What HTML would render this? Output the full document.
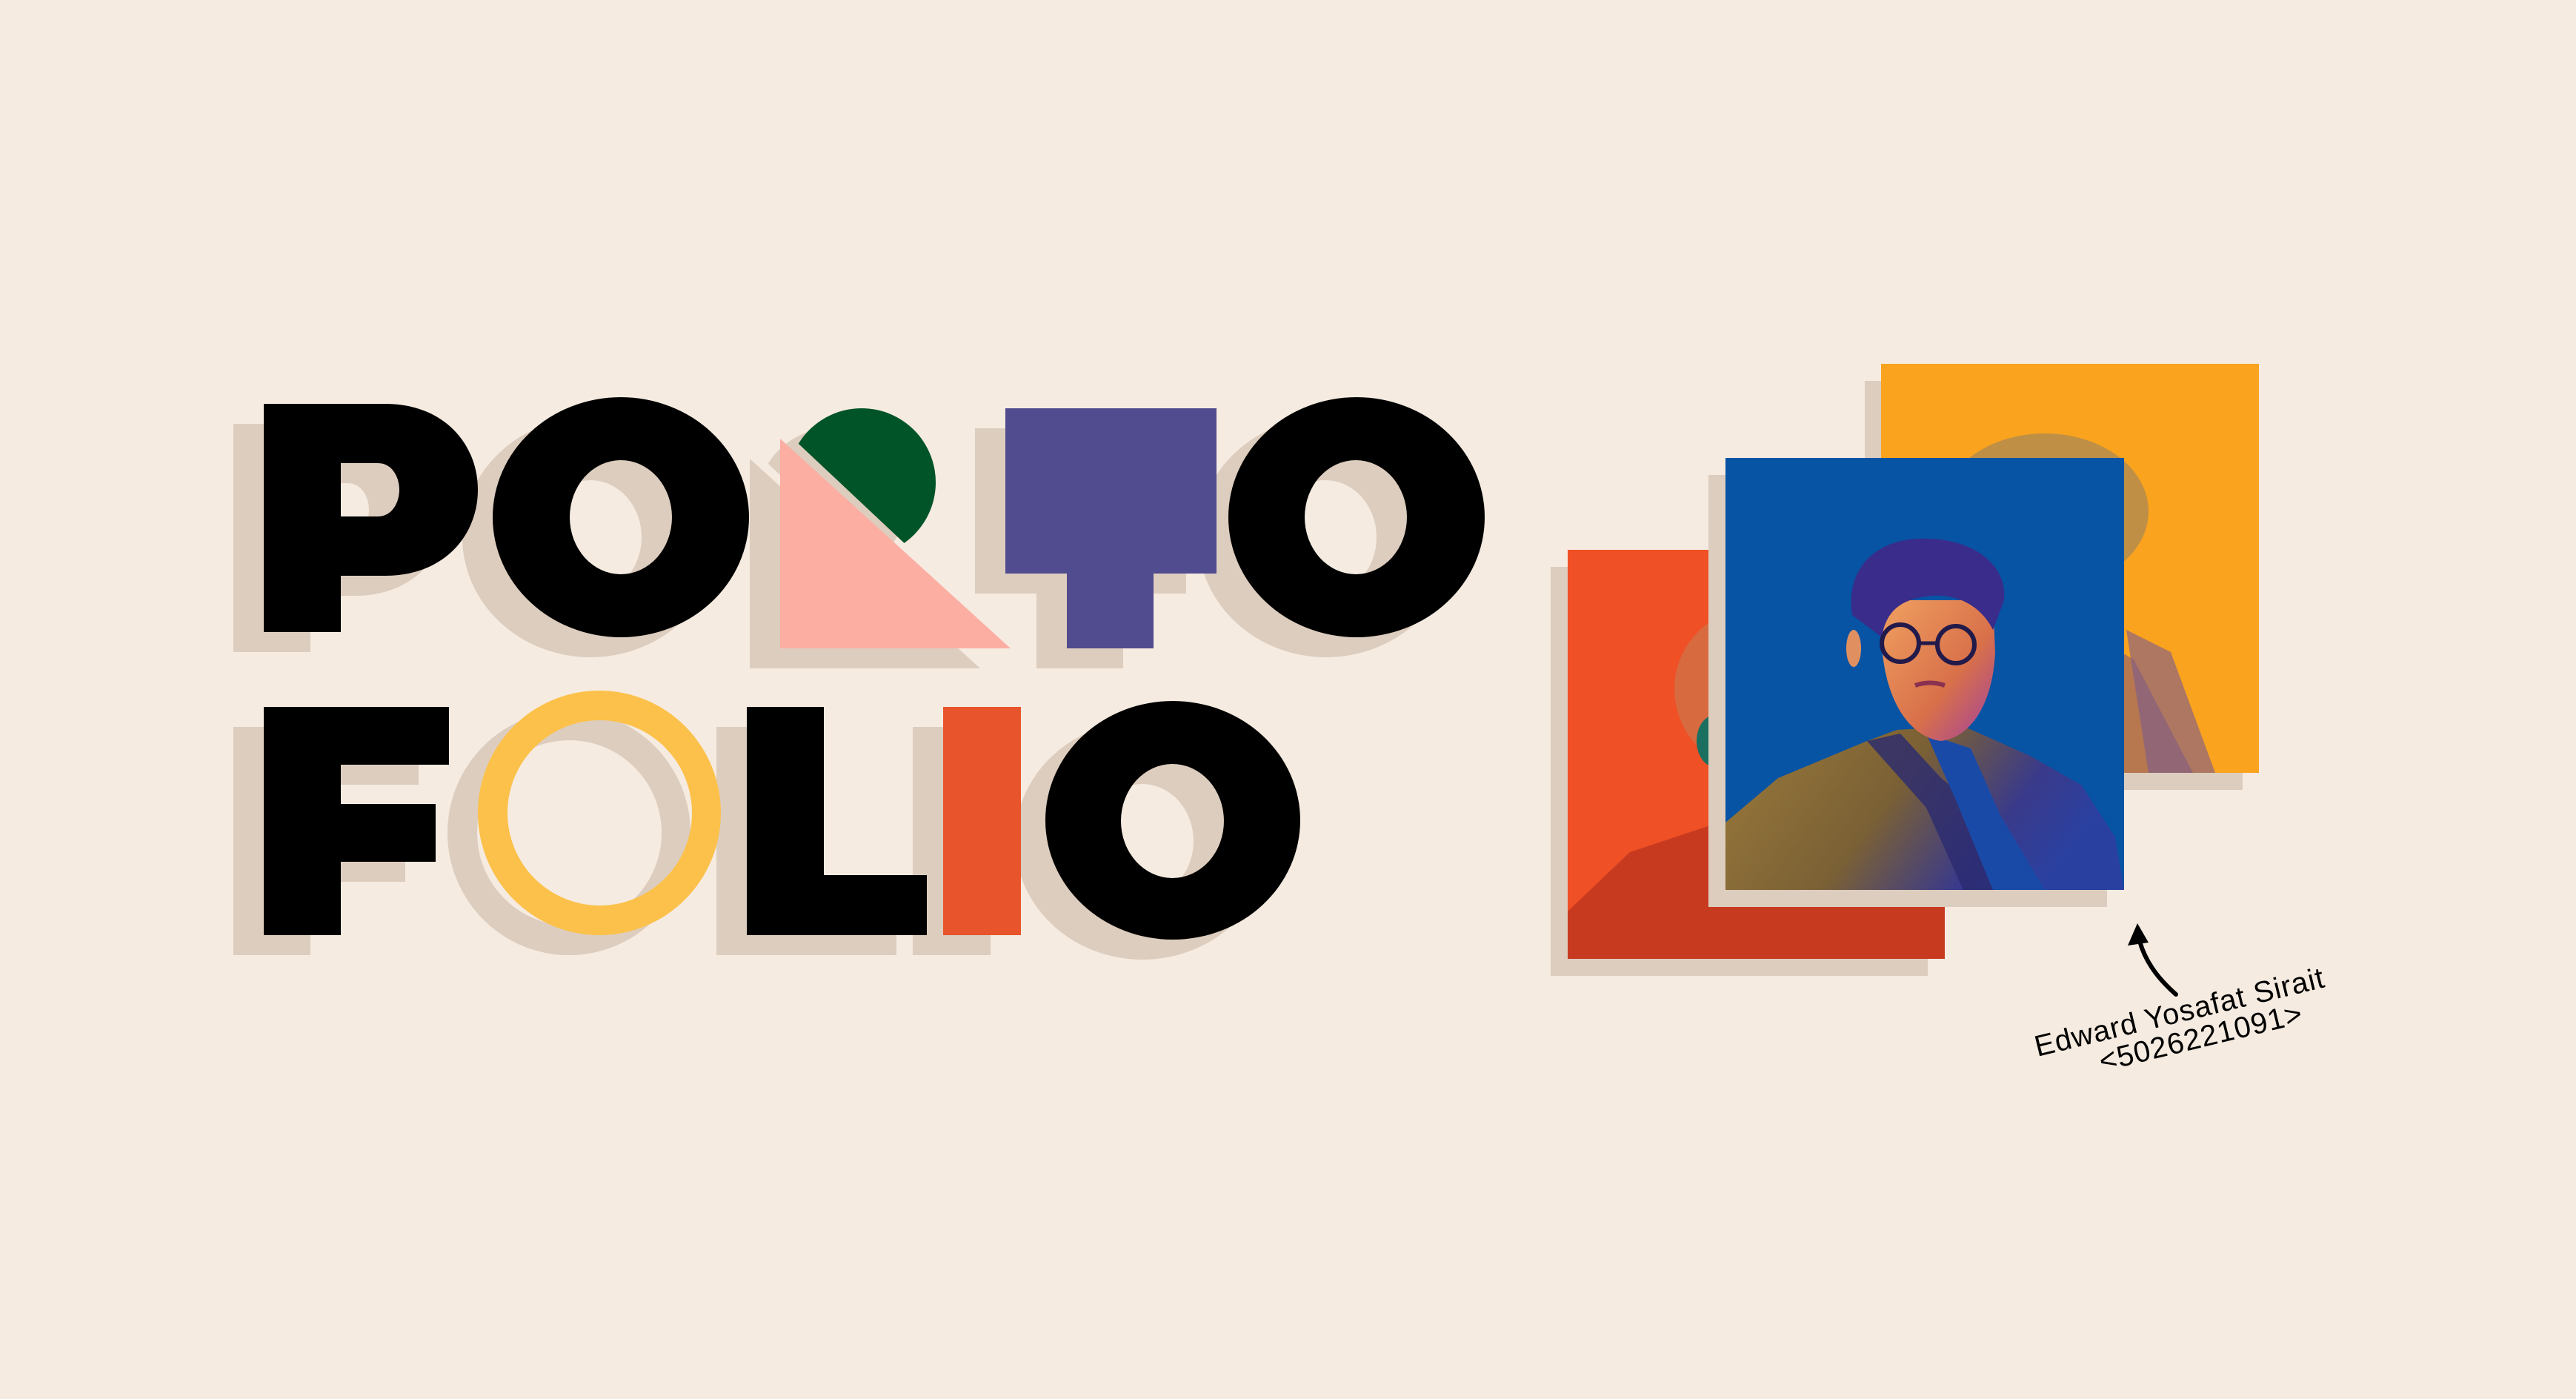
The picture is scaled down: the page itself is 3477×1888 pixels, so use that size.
<!DOCTYPE html>
<html><head><meta charset="utf-8"><style>
html,body{margin:0;padding:0;background:#f5ebe0;}
body{width:3477px;height:1888px;overflow:hidden;}
svg{display:block}
</style></head><body>
<svg width="3477" height="1888" viewBox="0 0 3477 1888" xmlns="http://www.w3.org/2000/svg">
<defs>
<clipPath id="gc"><polygon points="896,428 1394,896 1500,896 1500,300 896,300"/></clipPath>
<clipPath id="bc"><rect x="2329" y="618" width="538" height="583"/></clipPath>
<clipPath id="yc"><rect x="2539" y="491" width="510" height="552"/></clipPath>
<clipPath id="rc"><rect x="2116" y="742" width="509" height="552"/></clipPath>
<linearGradient id="jk" x1="0" y1="0" x2="1" y2="0.3">
<stop offset="0" stop-color="#9a7a3a"/><stop offset="0.5" stop-color="#7a6035"/><stop offset="0.8" stop-color="#3a3a8a"/><stop offset="1" stop-color="#2a40a0"/></linearGradient>
<linearGradient id="fc" x1="0" y1="0" x2="1" y2="1">
<stop offset="0" stop-color="#f0a060"/><stop offset="0.6" stop-color="#d8704a"/><stop offset="1" stop-color="#a040a0"/></linearGradient>
</defs>
<rect width="3477" height="1888" fill="#f5ebe0"/>

<!-- shadows -->
<g transform="translate(-41,27)" fill="#ddcdbe" fill-rule="evenodd">
<path d="M356 545H520C600 545 645 600 645 661C645 722 600 777 520 777H460V853H356Z M460 625H510C530 625 539 645 539 661C539 677 530 697 510 697H460Z"/>
<path d="M665 698A173 162 0 1 0 1011 698A173 162 0 1 0 665 698Z M769 698A69 77 0 1 1 907 698A69 77 0 1 1 769 698Z"/>
<polygon points="1053,592 1053,875 1364,875"/>
<circle cx="1163" cy="651" r="100" clip-path="url(#gc)"/>
<path d="M1357 551H1642V774H1557V875H1440V774H1357Z"/>
<path d="M1658 698A173 162 0 1 0 2004 698A173 162 0 1 0 1658 698Z M1761 698A69 77 0 1 1 1899 698A69 77 0 1 1 1761 698Z"/>
<path d="M356 954H606V1032H460V1085H588V1163H460V1262H356Z"/>
<path d="M645 1097A164 165 0 1 0 973 1097A164 165 0 1 0 645 1097Z M685 1097A124.5 125 0 1 1 934 1097A124.5 125 0 1 1 685 1097Z"/>
<path d="M1008 954H1112V1181H1251V1262H1008Z"/>
<rect x="1273" y="954" width="105" height="308"/>
<path d="M1411 1107A172 161 0 1 0 1755 1107A172 161 0 1 0 1411 1107Z M1513 1108A69.5 77 0 1 1 1652 1108A69.5 77 0 1 1 1513 1108Z"/>
</g>

<!-- letters -->
<g fill-rule="evenodd">
<path fill="#000" d="M356 545H520C600 545 645 600 645 661C645 722 600 777 520 777H460V853H356Z M460 625H510C530 625 539 645 539 661C539 677 530 697 510 697H460Z"/>
<path fill="#000" d="M665 698A173 162 0 1 0 1011 698A173 162 0 1 0 665 698Z M769 698A69 77 0 1 1 907 698A69 77 0 1 1 769 698Z"/>
<polygon fill="#fcaea2" points="1053,592 1053,875 1364,875"/>
<circle fill="#015428" cx="1163" cy="651" r="100" clip-path="url(#gc)"/>
<path fill="#514b8f" d="M1357 551H1642V774H1557V875H1440V774H1357Z"/>
<path fill="#000" d="M1658 698A173 162 0 1 0 2004 698A173 162 0 1 0 1658 698Z M1761 698A69 77 0 1 1 1899 698A69 77 0 1 1 1761 698Z"/>
<path fill="#000" d="M356 954H606V1032H460V1085H588V1163H460V1262H356Z"/>
<path fill="#fcc14a" d="M645 1097A164 165 0 1 0 973 1097A164 165 0 1 0 645 1097Z M685 1097A124.5 125 0 1 1 934 1097A124.5 125 0 1 1 685 1097Z"/>
<path fill="#000" d="M1008 954H1112V1181H1251V1262H1008Z"/>
<rect fill="#e8542b" x="1273" y="954" width="105" height="308"/>
<path fill="#000" d="M1411 1107A172 161 0 1 0 1755 1107A172 161 0 1 0 1411 1107Z M1513 1108A69.5 77 0 1 1 1652 1108A69.5 77 0 1 1 1513 1108Z"/>
</g>

<!-- photo shadows -->
<rect x="2517" y="514" width="510" height="552" fill="#ddcdbe"/>
<!-- yellow panel -->
<rect x="2539" y="491" width="510" height="552" fill="#f9a31f"/>
<g clip-path="url(#yc)">
<ellipse cx="2760" cy="690" rx="140" ry="105" fill="#b08a50" opacity="0.8"/>
<path d="M2760 820L2880 890L2960 1043H2700Z" fill="#a06a60" opacity="0.75"/>
<path d="M2870 850L2930 880L2990 1043H2900Z" fill="#7a5a90" opacity="0.6"/>
</g>
<rect x="2093" y="765" width="509" height="552" fill="#ddcdbe"/>
<!-- red panel -->
<rect x="2116" y="742" width="509" height="552" fill="#ef5025"/>
<g clip-path="url(#rc)">
<ellipse cx="2370" cy="930" rx="110" ry="110" fill="#d86a40"/>
<ellipse cx="2315" cy="1000" rx="25" ry="35" fill="#1a7060"/>
<path d="M2116 1230L2200 1150L2320 1110L2420 1120L2625 1200V1294H2116Z" fill="#c83a20"/>
</g>
<rect x="2306" y="641" width="538" height="583" fill="#ddcdbe"/>
<!-- blue panel -->
<rect x="2329" y="618" width="538" height="583" fill="#0753a4"/>
<g clip-path="url(#bc)">
<path d="M2329 1110L2400 1050L2520 1000L2560 985L2650 980L2740 1020L2810 1060L2855 1130L2867 1201H2329Z" fill="url(#jk)"/>
<path d="M2520 1000L2565 990L2620 1050L2680 1100L2720 1201H2650L2600 1090Z" fill="#2a2a70" opacity="0.8"/>
<path d="M2600 990L2660 1010L2700 1100L2760 1201H2690L2640 1080Z" fill="#1a4aa8"/>
<path d="M2540 870C2545 950 2580 995 2620 1000C2660 995 2690 950 2693 880L2690 810H2545Z" fill="url(#fc)"/>
<ellipse cx="2502" cy="875" rx="10" ry="25" fill="#e09060"/>
<path d="M2500 830C2490 760 2540 725 2600 727C2660 727 2710 760 2705 810L2690 850C2670 810 2630 800 2600 805C2560 810 2545 830 2540 860Z" fill="#3a2c8a"/>
<circle cx="2565" cy="868" r="25" fill="none" stroke="#221a4a" stroke-width="6"/>
<circle cx="2640" cy="870" r="25" fill="none" stroke="#221a4a" stroke-width="6"/>
<path d="M2590 868H2615" stroke="#221a4a" stroke-width="5"/>
<path d="M2585 925Q2605 918 2625 925" stroke="#8a3050" stroke-width="6" fill="none"/>
</g>

<!-- arrow -->
<path d="M2937 1342C2912 1320 2893 1295 2886 1262" fill="none" stroke="#000" stroke-width="6" stroke-linecap="round"/>
<polygon points="2885,1246 2872,1276 2900,1272" fill="#000"/>

<g transform="translate(2750,1426) rotate(-13.6)" font-family="Liberation Sans, sans-serif" font-size="40" fill="#000">
<text x="0" y="0" letter-spacing="1">Edward Yosafat Sirait</text>
<text x="80" y="40" letter-spacing="1">&lt;5026221091&gt;</text>
</g>
</svg>
</body></html>
